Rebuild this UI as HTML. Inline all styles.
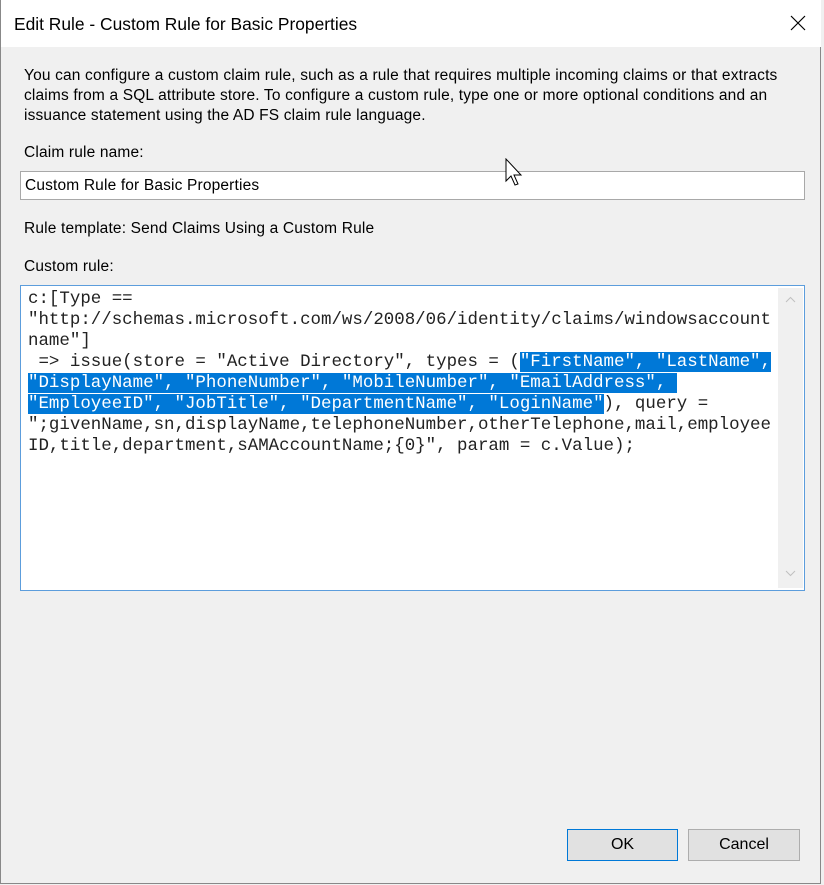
<!DOCTYPE html>
<html><head><style>
*{margin:0;padding:0;box-sizing:border-box}
body{width:824px;height:885px;background:#f0f0f0;font-family:"Liberation Sans",sans-serif;position:relative;overflow:hidden;color:#000}
.win{position:absolute;left:0;top:0;width:821px;height:884px;border:1px solid #888;border-top:none;background:#f0f0f0}
.title{position:absolute;left:0;top:0;width:820px;height:47px;background:#fff}
.title span{position:absolute;left:13px;top:14px;font-size:17.4px;color:#000}
.close{position:absolute;left:788px;top:14px}
.t{position:absolute;font-size:15.5px;color:#000;white-space:nowrap;letter-spacing:0.16px}
.p{left:23px;top:66px;line-height:20px}
.inp{position:absolute;left:19px;top:171px;width:785px;height:29px;background:#fff;border:1px solid #a8a8a8}
.ta{position:absolute;left:19px;top:285px;width:785px;height:306px;background:#fff;border:1px solid #5c9ddc}
.code{position:absolute;left:7px;top:3px;font-family:"Liberation Mono",monospace;font-size:17.45px;line-height:21px;white-space:pre;color:#222}
.hl{background:#0078d7;color:#fff}
.sb{position:absolute;left:757px;top:2px;width:25px;height:300px;background:#f0f0f0}
.btn{position:absolute;top:829px;height:32px;background:#e1e1e1;border:1px solid #adadad;font-size:16px;text-align:center;line-height:30px}
</style></head><body>
<div class="win">
<div class="title"><span>Edit Rule - Custom Rule for Basic Properties</span>
<svg class="close" width="18" height="18" viewBox="0 0 18 18"><path d="M2 2L16 16M16 2L2 16" stroke="#000" stroke-width="1.2"/></svg></div>
<div class="t p">You can configure a custom claim rule, such as a rule that requires multiple incoming claims or that extracts<br>claims from a SQL attribute store. To configure a custom rule, type one or more optional conditions and an<br>issuance statement using the AD FS claim rule language.</div>
<div class="t" style="left:23px;top:144px">Claim rule name:</div>
<div class="inp"><div class="t" style="left:4px;top:5px">Custom Rule for Basic Properties</div></div>
<div class="t" style="left:23px;top:220px">Rule template: Send Claims Using a Custom Rule</div>
<div class="t" style="left:23px;top:258px">Custom rule:</div>
<div class="ta">
<div class="code">c:[Type ==
"http://schemas.microsoft.com/ws/2008/06/identity/claims/windowsaccount
name"]
 =&gt; issue(store = "Active Directory", types = (<span class="hl">"FirstName", "LastName",</span>
<span class="hl">"DisplayName", "PhoneNumber", "MobileNumber", "EmailAddress", </span>
<span class="hl">"EmployeeID", "JobTitle", "DepartmentName", "LoginName"</span>), query =
";givenName,sn,displayName,telephoneNumber,otherTelephone,mail,employee
ID,title,department,sAMAccountName;{0}", param = c.Value);</div>
<div class="sb">
<svg style="position:absolute;left:7px;top:8px" width="11" height="7"><path d="M1 6L5.5 1.5L10 6" stroke="#c0c0c0" fill="none"/></svg>
<svg style="position:absolute;left:7px;top:282px" width="11" height="7"><path d="M1 1L5.5 5.5L10 1" stroke="#c0c0c0" fill="none"/></svg>
</div>
</div>
<svg style="position:absolute;left:504px;top:158px" width="20" height="30" viewBox="0 0 20 30"><path d="M1 1L1 23L6 18L10 27L13 26L9 17L16 17Z" fill="#fff" stroke="#000" stroke-width="1"/></svg>
<div class="btn" style="left:566px;width:111px;border:1px solid #0078d7">OK</div>
<div class="btn" style="left:687px;width:112px">Cancel</div>
</div>
</body></html>
